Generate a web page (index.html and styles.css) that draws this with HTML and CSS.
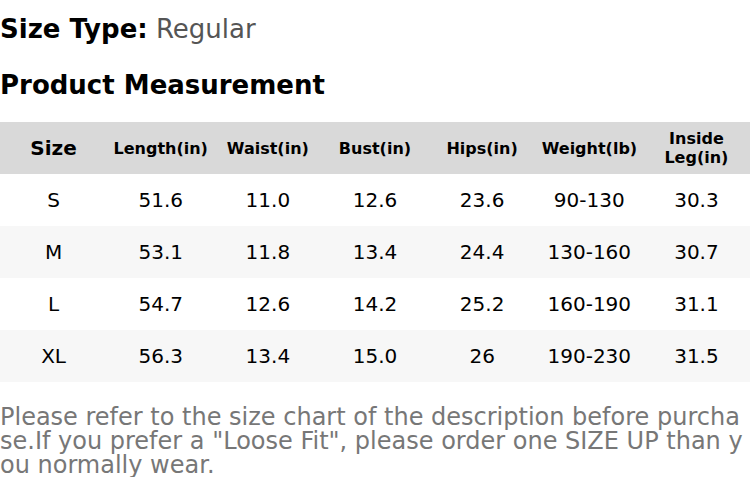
FILE: index.html
```html
<!DOCTYPE html>
<html>
<head>
<meta charset="utf-8">
<link rel="stylesheet" href="styles.css">
</head>
<body>
<div class="page">
  <h2 class="type"><b>Size Type:</b> <span class="val">Regular</span></h2>
  <h2 class="title">Product Measurement</h2>
  <table class="chart">
    <thead>
      <tr>
        <th class="big">Size</th>
        <th>Length(in)</th>
        <th>Waist(in)</th>
        <th>Bust(in)</th>
        <th>Hips(in)</th>
        <th>Weight(lb)</th>
        <th>Inside Leg(in)</th>
      </tr>
    </thead>
    <tbody>
      <tr><td>S</td><td>51.6</td><td>11.0</td><td>12.6</td><td>23.6</td><td>90-130</td><td>30.3</td></tr>
      <tr><td>M</td><td>53.1</td><td>11.8</td><td>13.4</td><td>24.4</td><td>130-160</td><td>30.7</td></tr>
      <tr><td>L</td><td>54.7</td><td>12.6</td><td>14.2</td><td>25.2</td><td>160-190</td><td>31.1</td></tr>
      <tr><td>XL</td><td>56.3</td><td>13.4</td><td>15.0</td><td>26</td><td>190-230</td><td>31.5</td></tr>
    </tbody>
  </table>
  <p class="note">Please refer to the size chart of the description before purchase.If you prefer a "Loose Fit", please order one SIZE UP than you normally wear.</p>
</div>
</body>
</html>
```
FILE: styles.css
```css
html, body {
  margin: 0;
  padding: 0;
  background: #fff;
}
.page {
  font-family: "DejaVu Sans", sans-serif;
  color: #000;
  width: 750px;
}
.type {
  margin: 0;
  padding-top: 14px;
  font-size: 26px;
  line-height: 30px;
  font-weight: normal;
}
.type b { font-weight: bold; }
.type .val { color: #555; }
.title {
  margin: 0;
  padding-top: 26px;
  font-size: 26px;
  line-height: 30px;
  font-weight: bold;
}
.chart {
  margin-top: 22px;
  width: 750px;
  border-collapse: collapse;
  table-layout: fixed;
}
.chart th {
  background: #d9d9d9;
  height: 52px;
  padding: 0 6px;
  font-size: 16px;
  font-weight: bold;
  line-height: 19px;
  text-align: center;
}
.chart th.big { font-size: 20px; }
.chart td {
  height: 52px;
  padding: 0;
  font-size: 20px;
  text-align: center;
}
.chart tbody tr:nth-child(even) td { background: #f7f7f7; }
.note {
  margin: 23px 0 0;
  color: #777;
  font-size: 24px;
  line-height: 24px;
  word-break: break-all;
}
```
